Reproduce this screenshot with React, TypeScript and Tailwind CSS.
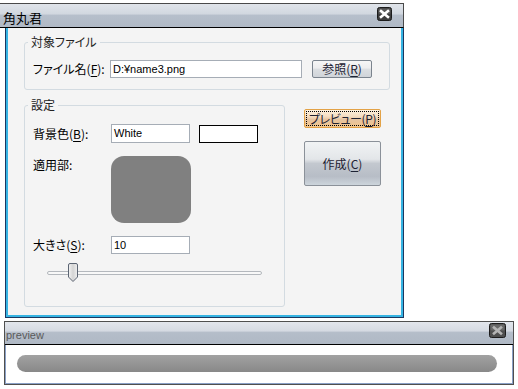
import React from "react";

const jp = "font-['Noto_Sans_CJK_JP',sans-serif] [font-feature-settings:'palt']";
const latin = "font-['Liberation_Sans',Arial,sans-serif]";

function CloseX({ w, h, bg, fg }: { w: number; h: number; bg: string; fg: string }) {
  const cx = w / 2;
  const cy = h / 2;
  return (
    <svg width={w} height={h} viewBox={`0 0 ${w} ${h}`} className="block">
      <rect x="0.5" y="0.5" width={w - 1} height={h - 1} rx="2" fill={bg} stroke="#1c1c1c" />
      <rect x="1.5" y="1.5" width={w - 3} height={(h - 3) / 2} rx="1" fill="#ffffff" opacity="0.15" />
      <path
        d={`M${cx - 3.5} ${cy - 3} L${cx + 3.5} ${cy + 3} M${cx + 3.5} ${cy - 3} L${cx - 3.5} ${cy + 3}`}
        stroke={fg}
        strokeWidth="2.6"
        strokeLinecap="square"
      />
    </svg>
  );
}

function U({ children }: { children: React.ReactNode }) {
  return <span className="underline underline-offset-[2px]">{children}</span>;
}

function Legend({ children }: { children: React.ReactNode }) {
  return (
    <div className="-mt-[8px] ml-[3px] self-start px-[3px] h-[14px] leading-[14px] bg-[#f4f4f4] text-[12px] text-[#222]">
      {children}
    </div>
  );
}

function TextBox({ w, h, children }: { w: string; h: string; children: React.ReactNode }) {
  return (
    <div
      className={`${w} ${h} border border-[#a6adb6] bg-white flex items-center pl-[2px] ${latin} text-[11px] text-black`}
    >
      {children}
    </div>
  );
}

function Thumb() {
  return (
    <svg width="10" height="19" viewBox="0 0 10 19" className="block">
      <defs>
        <linearGradient id="tg" x1="0" y1="0" x2="1" y2="0">
          <stop offset="0" stopColor="#f4f4f4" />
          <stop offset="0.5" stopColor="#d4d4d4" />
          <stop offset="1" stopColor="#f0f0f0" />
        </linearGradient>
      </defs>
      <path
        d="M0.5 2 Q0.5 0.5 2 0.5 H8 Q9.5 0.5 9.5 2 V14 L5 18.5 L0.5 14 Z"
        fill="url(#tg)"
        stroke="#5c6573"
      />
    </svg>
  );
}

export default function App() {
  return (
    <div className={`w-[518px] h-[389px] bg-white overflow-hidden ${jp} text-[12px] text-black`}>
      {/* main window */}
      <div className="pt-[3px] w-[404px]">
        <div className="h-[25px] border-t border-r border-[#4a4a4a] border-b border-b-black bg-[linear-gradient(#e0e4ea_0%,#d2d8e0_42%,#b6bfcb_50%,#b0b9c5_100%)] flex items-start justify-between pl-[3px] pr-[11px]">
          <span className="text-[13px] leading-[14px] mt-[7px] text-black">角丸君</span>
          <div className="mt-[3px]">
            <CloseX w={15} h={14} bg="#3c3c3c" fg="#ffffff" />
          </div>
        </div>
        <div className="ml-[5px] w-[399px] h-[290px] border-x border-b border-[#1b3760]">
          <div className="h-full border-x-2 border-b-2 border-[#36b4e3] bg-[#f4f4f4] flex flex-col">
            {/* group 1 */}
            <div className="mt-[14px] ml-[16px] w-[366px] h-[48px] border border-[#d3dbe1] rounded-[3px] flex flex-col">
              <Legend>対象ファイル</Legend>
              <div className="mt-[11px] flex items-center h-[18px] pl-[8px]">
                <div className="w-[77px] leading-[14px] whitespace-nowrap">
                  ファイル名(<U>F</U>):
                </div>
                <TextBox w="w-[192px]" h="h-[18px]">D:¥name3.png</TextBox>
                <div className="ml-[10px] w-[60px] h-[18px] border border-[#7b848e] rounded-[2px] bg-[linear-gradient(#f6f6f6_0%,#ededee_45%,#dcdfe2_50%,#d0d4d9_100%)] flex items-center justify-center leading-[14px] whitespace-nowrap text-[#1d2233]">
                  参照(<U>R</U>)
                </div>
              </div>
            </div>

            <div className="mt-[15px] flex">
              {/* group 2 */}
              <div className="ml-[16px] w-[261px] h-[202px] border border-[#d3dbe1] rounded-[3px] flex flex-col">
                <Legend>設定</Legend>
                <div className="mt-[12px] flex items-center h-[19px] pl-[8px]">
                  <div className="w-[78px] leading-[14px] whitespace-nowrap">
                    背景色(<U>B</U>):
                  </div>
                  <TextBox w="w-[79px]" h="h-[19px]">White</TextBox>
                  <div className="ml-[9px] w-[59px] h-[18px] border border-black bg-white" />
                </div>
                <div className="mt-[13px] flex items-start pl-[8px]">
                  <div className="w-[78px] mt-[2px] leading-[14px]">適用部:</div>
                  <div className="w-[80px] h-[67px] rounded-[13px] bg-[#808080]" />
                </div>
                <div className="mt-[13px] flex items-center h-[18px] pl-[8px]">
                  <div className="w-[78px] leading-[14px] whitespace-nowrap">
                    大きさ(<U>S</U>):
                  </div>
                  <TextBox w="w-[79px]" h="h-[18px]">10</TextBox>
                </div>
                <div className="mt-[9px] ml-[22px] w-[215px] h-[19px] relative flex items-center">
                  <div className="w-full h-[4px] rounded-[2px] border border-[#b4b8bd] bg-[#f8f8f8]" />
                  <div className="absolute left-[21px] top-0">
                    <Thumb />
                  </div>
                </div>
              </div>

              {/* buttons */}
              <div className="ml-[19px] pt-[4px] flex flex-col">
                <div className="w-[77px] h-[19px] border border-[#e3a246] rounded-[2px] bg-[linear-gradient(#fdf1df_0%,#f4dcc0_40%,#e6c4a2_55%,#f2c48a_100%)] p-[1px]">
                  <div className="w-full h-full border border-dotted border-black flex items-center justify-center leading-[12px] whitespace-nowrap tracking-[-0.4px] text-[#1d2233]">
                    プレビュー(<U>P</U>)
                  </div>
                </div>
                <div className="mt-[13px] w-[77px] h-[45px] border border-[#8b9199] rounded-[2px] bg-[linear-gradient(#f1f3f4_0%,#e3e6e9_40%,#c3c8cf_50%,#b7bdc6_80%,#cdd5dc_100%)] flex items-center justify-center leading-[14px] whitespace-nowrap text-[#1d2233]">
                  作成(<U>C</U>)
                </div>
              </div>
            </div>
          </div>
        </div>
      </div>

      {/* preview window */}
      <div className="mt-[3px] ml-[4px] w-[510px] h-[64px] border border-[#4f4f4f] flex flex-col">
        <div className="h-[23px] border-b border-black bg-[linear-gradient(#e2e6ec_0%,#d5dae2_40%,#b4bdc9_48%,#b0b9c5_100%)] flex items-start justify-between pl-[1px] pr-[7px]">
          <span className={`${latin} text-[11px] leading-[12px] mt-[7px] text-[#5a5a5a]`}>preview</span>
          <div className="mt-[1px]">
            <CloseX w={17} h={15} bg="#4e4e4e" fg="#b4b4b4" />
          </div>
        </div>
        <div className="flex-1 border-x border-b border-[#8aa0c6] bg-white">
          <div className="mt-[10px] ml-[11px] w-[480px] h-[17px] rounded-full bg-[linear-gradient(#a2a2a2,#888888)]" />
        </div>
      </div>
    </div>
  );
}
